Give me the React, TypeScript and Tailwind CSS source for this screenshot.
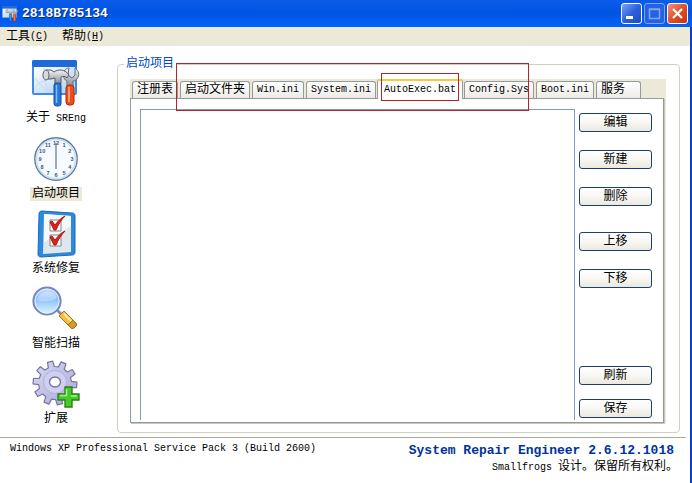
import { useState, type ReactNode } from "react";
import { clsx } from "clsx";

const TABS = [
  { label: "注册表", latin: false },
  { label: "启动文件夹", latin: false },
  { label: "Win.ini", latin: true },
  { label: "System.ini", latin: true },
  { label: "AutoExec.bat", latin: true },
  { label: "Config.Sys", latin: true },
  { label: "Boot.ini", latin: true },
  { label: "服务", latin: false },
];

function AppIcon({ className }: { className: string }) {
  return (
    <svg viewBox="0 0 48 48" className={className} aria-hidden="true">
      <defs>
        <linearGradient id="appPane" x1="0" y1="0" x2="1" y2="1">
          <stop offset="0" stopColor="#ffffff" />
          <stop offset="1" stopColor="#a9cdf5" />
        </linearGradient>
        <linearGradient id="steel" x1="0" y1="0" x2="0" y2="1">
          <stop offset="0" stopColor="#f4f4f4" />
          <stop offset="1" stopColor="#85898f" />
        </linearGradient>
      </defs>
      <rect x="0" y="1" width="45" height="35" rx="2" fill="#3f8ce4" />
      <rect x="0" y="1" width="45" height="7" rx="2" fill="#1f69d8" />
      <path d="M2 8h41v26H2z" fill="url(#appPane)" />
      <path d="M3 28c8-8 13-6 19-12M3 19c5 8 10 10 16 14M12 9c0 9 1 16 5 24" stroke="#c6dbf5" fill="none" />
      <path
        d="M35 28v-6c-4-2-5-7-2-11 1-1 2-2 4-2l-1 7 4 3 3-3v-7c4 3 5 7 2 11-1 1-2 2-4 2v6z"
        fill="url(#steel)"
        stroke="#666b72"
      />
      <rect x="34" y="26" width="8" height="20" rx="3" fill="#ef4c18" stroke="#a92c0b" />
      <path d="M37 28v15" stroke="#ff9a70" strokeWidth="2" />
      <path
        d="M14 11h5l3 2c4-3 11-3 15 3l-2 3c-2-2-4-2-6-1v7h-6v-6l-4 1h-5z"
        fill="url(#steel)"
        stroke="#565b62"
      />
      <ellipse cx="14" cy="16" rx="3" ry="5" fill="#d9dadc" stroke="#5f646b" />
      <rect x="22" y="24" width="7" height="23" rx="2.5" fill="#2476dc" stroke="#154c9c" />
      <path d="M24.500 26v18" stroke="#82bafa" strokeWidth="1.5" />
    </svg>
  );
}

function ClockIcon({ className }: { className: string }) {
  return (
    <svg viewBox="0 0 48 48" className={className} aria-hidden="true">
      <circle cx="24" cy="24" r="21.2" fill="#f7fbff" stroke="#5c7ba6" strokeWidth="1.4" />
      <circle cx="24" cy="24" r="19.5" fill="none" stroke="#cddff2" strokeWidth="1.6" />
      {[0, 1, 2, 3, 4, 5, 6, 7, 8, 9, 10, 11].map((n) => (
        <text
          key={n}
          x={24 + 16 * Math.sin((n * Math.PI) / 6)}
          y={26 - 16 * Math.cos((n * Math.PI) / 6)}
          textAnchor="middle"
          fontSize="5.5"
          fontWeight="700"
          fill="#35568c"
          fontFamily="Liberation Sans, sans-serif"
        >
          {n === 0 ? 12 : n}
        </text>
      ))}
      <path d="M24 8v26" stroke="#5d7396" strokeWidth="1.2" />
    </svg>
  );
}

function ChecklistIcon({ className }: { className: string }) {
  return (
    <svg viewBox="0 0 48 48" className={className} aria-hidden="true">
      <path d="M10 1l30 2c2 0 3 1 3 3v36c0 2-1 3-3 3l-31 2c-2 0-3-1-3-3L7 4c0-2 1-3 3-3z" fill="#2a8ade" stroke="#1b69b8" />
      <path d="M12 4l27 2v36l-28 2z" fill="#dfe6ee" />
      <path d="M12 4l27 2v10L12 32z" fill="#f6f8fb" />
      <path d="M18 10h11v11H18zM18 25h11v11H18z" fill="#ffffff" stroke="#7c838b" />
      <path d="M18 12l2-1 3 4c3-4 6-7 10-9-4 4-7 9-9 14h-2z" fill="#d92218" stroke="#b3140d" />
      <path d="M18 27l2-1 3 4c3-4 6-7 10-9-4 4-7 9-9 14h-2z" fill="#d92218" stroke="#b3140d" />
    </svg>
  );
}

function MagnifierIcon({ className }: { className: string }) {
  return (
    <svg viewBox="0 0 48 48" className={className} aria-hidden="true">
      <defs>
        <linearGradient id="lens" x1="0" y1="0" x2="0" y2="1">
          <stop offset="0" stopColor="#cfe4ff" />
          <stop offset="0.4" stopColor="#86bcfb" />
          <stop offset="1" stopColor="#e2fbff" />
        </linearGradient>
      </defs>
      <path d="M25 25l6 6" stroke="#8b8fa5" strokeWidth="3" />
      <path d="M32 26l12 12c2 2-3 7-5 5L27 31z" fill="#f6bd43" stroke="#a77318" />
      <path d="M32 29l10 10" stroke="#ffe9a5" strokeWidth="2" />
      <path d="M41 35l3 3c2 2-3 7-5 5l-3-3z" fill="#d9982a" stroke="#a77318" />
      <circle cx="15" cy="16" r="13.6" fill="url(#lens)" stroke="#7487bf" strokeWidth="2" />
      <circle cx="15" cy="16" r="12" fill="none" stroke="#e4edfc" />
      <path d="M5 15C7 5 22 4 25 13c-6 4-13 4-20 2z" fill="#ffffff" opacity="0.35" />
    </svg>
  );
}

const GEAR_TEETH = 10;

// outline of the cog: each tooth is root, tip, tip, root
const gearPoints = Array.from({ length: GEAR_TEETH }, (_, i) => {
  const mid = (i * 360) / GEAR_TEETH - 13;
  return [
    [-11, 16.5],
    [-7, 22],
    [7, 22],
    [11, 16.5],
  ]
    .map(([offset, r]) => {
      const a = ((mid + offset) * Math.PI) / 180;
      return `${(23 + r * Math.sin(a)).toFixed(1)},${(23 - r * Math.cos(a)).toFixed(1)}`;
    })
    .join(" ");
}).join(" ");

function GearIcon({ className }: { className: string }) {
  return (
    <svg viewBox="0 0 48 48" className={className} aria-hidden="true">
      <defs>
        <linearGradient id="gear" x1="0" y1="0" x2="1" y2="1">
          <stop offset="0" stopColor="#d8d8f3" />
          <stop offset="1" stopColor="#a9a9d8" />
        </linearGradient>
      </defs>
      <polygon points={gearPoints} fill="url(#gear)" stroke="#7676a2" strokeWidth="1.2" strokeLinejoin="round" />
      <circle cx="23" cy="22" r="11.5" fill="#cfcff0" stroke="#b1b1dc" />
      <ellipse cx="23" cy="22" rx="5.5" ry="5" fill="#ffffff" stroke="#73739f" strokeWidth="1.4" />
      <path d="M33 27h7v7h7v6h-7v7h-7v-7h-7v-6h7z" fill="#47c82d" stroke="#258514" strokeWidth="1.4" />
      <path d="M34.500 29v6.500H28M39 36h6" stroke="#a5f28d" strokeWidth="1.4" fill="none" />
    </svg>
  );
}

const SIDEBAR = [
  { label: "关于", latin: "SREng", Icon: AppIcon },
  { label: "启动项目", latin: "", Icon: ClockIcon },
  { label: "系统修复", latin: "", Icon: ChecklistIcon },
  { label: "智能扫描", latin: "", Icon: MagnifierIcon },
  { label: "扩展", latin: "", Icon: GearIcon },
];

function MenuItem({ label, hotkey }: { label: string; hotkey: string }) {
  return (
    <button type="button" className="flex items-center whitespace-nowrap">
      {label}
      <span className="text-[10px]">
        (<u>{hotkey}</u>)
      </span>
    </button>
  );
}

function CaptionButton({ label, className, children }: { label: string; className: string; children: ReactNode }) {
  return (
    <button
      type="button"
      aria-label={label}
      className={clsx("size-[21px] rounded-[3px] border", className)}
    >
      <svg viewBox="0 0 19 19" className="size-full" aria-hidden="true">
        {children}
      </svg>
    </button>
  );
}

function PushButton({ children }: { children: ReactNode }) {
  return (
    <button
      type="button"
      className="flex h-[19px] w-[73px] items-center justify-center rounded-[3px] border border-[#1c3f6c] bg-linear-to-b from-white via-[#f8f7f3] to-[#ebe8df] leading-none"
    >
      {children}
    </button>
  );
}

export default function App() {
  const [activeTab, setActiveTab] = useState("AutoExec.bat");
  const [section, setSection] = useState("启动项目");

  return (
    <div className="flex min-h-screen flex-col bg-white font-['Liberation_Mono','Noto_Sans_CJK_SC',monospace] text-xs leading-[14px] text-black">
      <header className="flex h-[27px] items-center bg-linear-to-b from-[#0a5be8] via-[#0054e3] to-[#0264fa] pr-1 pl-0.5">
        <AppIcon className="size-4" />
        <h1 className="ml-1 flex-1 text-[13px] font-bold text-white [text-shadow:1px_1px_#0a2a80]">2818B785134</h1>
        <div className="flex gap-0.5">
          <CaptionButton label="最小化" className="border-white bg-linear-to-br from-[#7ba1f1] via-[#2c61dc] to-[#1c4cc4]">
            <path d="M4 12h7v3H4z" fill="#fff" />
          </CaptionButton>
          <CaptionButton label="最大化" className="border-[#7da5f2] bg-[#2461e3]">
            <path d="M4.500 5h10v9.500h-10zM4 5.500h11" fill="none" stroke="#7fa6f4" strokeWidth="1.5" />
          </CaptionButton>
          <CaptionButton label="关闭" className="border-white bg-linear-to-br from-[#f0907a] via-[#e0512c] to-[#c5300c]">
            <path d="M5 5l9 9M14 5l-9 9" stroke="#fff" strokeWidth="2.2" />
          </CaptionButton>
        </div>
      </header>

      <div className="flex flex-1 flex-col border-r-2 border-[#0b3fc8]">
        <nav className="flex h-[19px] items-center gap-3.5 bg-[#ece9d8] px-1.5">
          <MenuItem label="工具" hotkey="C" />
          <MenuItem label="帮助" hotkey="H" />
        </nav>

        <div className="flex flex-1">
          <aside className="flex w-28 shrink-0 flex-col gap-[9px] pt-[13px]">
            {SIDEBAR.map(({ label, latin, Icon }) => (
              <button
                key={label}
                type="button"
                onClick={() => setSection(label)}
                className="flex flex-col items-center gap-1"
              >
                <Icon className="size-12" />
                <span className={clsx("px-0.5 whitespace-nowrap", section === label && "bg-[#ece9d8]")}>
                  {label}
                  {latin && <span className="text-[10px]"> {latin}</span>}
                </span>
              </button>
            ))}
          </aside>

          <fieldset className="relative mt-[11px] mr-2.5 mb-1 ml-[5px] flex min-w-0 flex-1 flex-col rounded-[4px] border border-[#d0d0bf] pt-2 pr-[13px] pb-[9px] pl-3">
            <legend className="-ml-1.5 px-0.5 text-[#0046d5]">启动项目</legend>

            <div className="flex flex-1 flex-col bg-[#ece9d8]">
              <div role="tablist" className="flex h-[19px] items-end gap-0.5 pl-0.5">
                {TABS.map(({ label, latin }) => {
                  const active = activeTab === label;
                  return (
                    <button
                      key={label}
                      type="button"
                      role="tab"
                      aria-selected={active}
                      onClick={() => setActiveTab(label)}
                      className={clsx(
                        "relative flex items-center justify-center rounded-t-[3px] border border-b-0 border-[#919b9c] whitespace-nowrap",
                        latin && "text-[10px]",
                        active
                          ? "z-10 -mx-px -mb-px h-5 border-t-2 border-t-[#ffc73c] bg-white px-1.5"
                          : "h-[17px] bg-linear-to-b from-white to-[#ecebe6] px-1",
                      )}
                    >
                      {label}
                      {active && (
                        <span className="pointer-events-none absolute inset-x-[3px] -top-2 -bottom-0.5 border border-[#b5242c]" />
                      )}
                      {label === "服务" && <span className="w-[11px]" />}
                    </button>
                  );
                })}
              </div>

              <div
                role="tabpanel"
                className="mr-0.5 flex flex-1 gap-1 border border-[#919b9c] bg-white pt-2.5 pr-[11px] pb-0.5 pl-[9px] shadow-[1px_1px_#c9c7ba]"
              >
                <textarea
                  aria-label={activeTab}
                  className="min-w-0 flex-1 resize-none border border-b-0 border-[#7f9db9] bg-white p-1 text-[10px] outline-none"
                />
                <div className="flex flex-col gap-[18px] pt-1 pb-0.5">
                  <PushButton>编辑</PushButton>
                  <PushButton>新建</PushButton>
                  <PushButton>删除</PushButton>
                  <div className="flex flex-col gap-[18px] pt-2">
                    <PushButton>上移</PushButton>
                    <PushButton>下移</PushButton>
                  </div>
                  <div className="mt-auto flex flex-col gap-3.5">
                    <PushButton>刷新</PushButton>
                    <PushButton>保存</PushButton>
                  </div>
                </div>
              </div>
            </div>

            {/* red frame around the startup file tabs */}
            <span className="pointer-events-none absolute -top-2 left-[58px] z-20 h-12 w-[353px] border border-[#b5242c]" />
          </fieldset>
        </div>

        <footer className="mr-1 flex h-[46px] justify-between border-t border-[#aca899] pt-1 pr-3 pl-2.5">
          <p className="text-[10px]">Windows XP Professional Service Pack 3 (Build 2600)</p>
          <div className="text-right">
            <p className="text-[13px] leading-[18px] font-bold text-[#003399]">System Repair Engineer 2.6.12.1018</p>
            <p className="-mr-1">
              <span className="text-[10px]">Smallfrogs </span>设计。保留所有权利。
            </p>
          </div>
        </footer>
      </div>
    </div>
  );
}
